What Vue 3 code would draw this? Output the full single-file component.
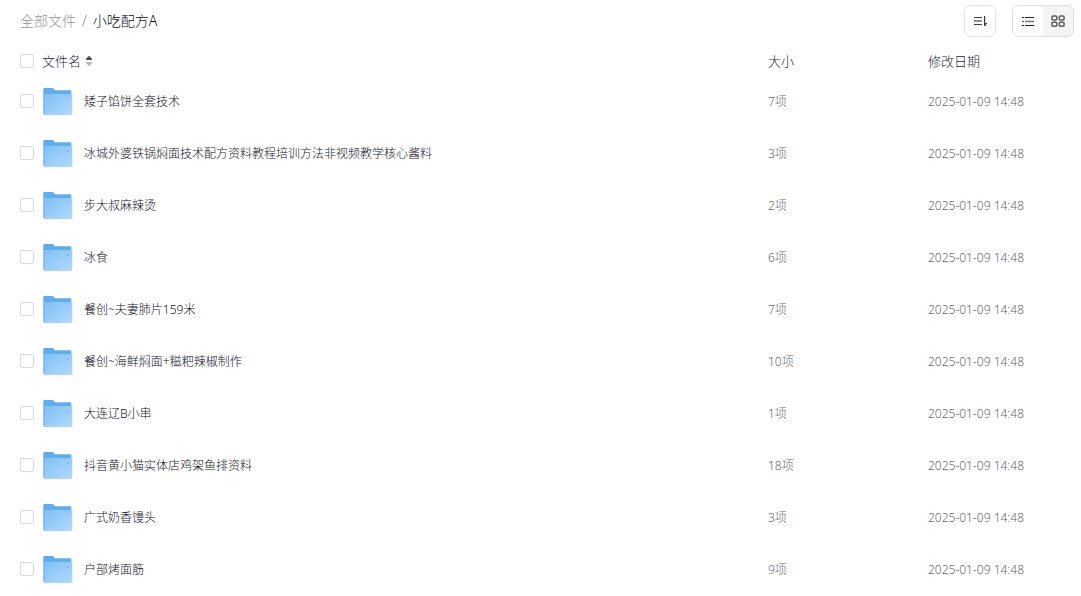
<script setup>
import { ref } from 'vue'

const date = '2025-01-09 14:48'
const files = ref([
  { name: '矮子馅饼全套技术', size: '7项', date },
  { name: '冰城外婆铁锅焖面技术配方资料教程培训方法非视频教学核心酱料', size: '3项', date },
  { name: '步大叔麻辣烫', size: '2项', date },
  { name: '冰食', size: '6项', date },
  { name: '餐创~夫妻肺片159米', size: '7项', date },
  { name: '餐创~海鲜焖面+糍粑辣椒制作', size: '10项', date },
  { name: '大连辽B小串', size: '1项', date },
  { name: '抖音黄小猫实体店鸡架鱼排资料', size: '18项', date },
  { name: '广式奶香馒头', size: '3项', date },
  { name: '户部烤面筋', size: '9项', date },
])
const selected = ref([])

function toggleAll(event) {
  selected.value = event.target.checked ? files.value.map((f) => f.name) : []
}
</script>

<template>
  <main class="page">
    <header class="bar">
      <nav class="crumbs" aria-label="路径">
        <a href="#" class="root">全部文件</a>
        <span class="slash">/</span>
        <span class="current">小吃配方A</span>
      </nav>
      <div class="tools">
        <button type="button" class="sort" aria-label="排序">
          <svg width="16" height="16" viewBox="0 0 16 16" fill="none">
            <path d="M2 4.5h8M2 11.5h8" stroke="#3e3f44" stroke-width="1.2" />
            <path d="M2 8h8" stroke="#77787c" stroke-width="1.6" />
            <path d="M12.6 3v10" stroke="#3e3f44" stroke-width="1.3" />
            <path d="M12 10h3.5L12.5 13.2z" fill="#3e3f44" />
          </svg>
        </button>
        <div class="views">
          <button type="button" class="view on" aria-label="列表">
            <svg width="16" height="16" viewBox="0 0 16 16" fill="none">
              <path d="M2 4.5h2M5 4.5h9M2 12.5h2M5 12.5h9" stroke="#26272c" stroke-width="1.2" />
              <path d="M2 8.4h2M5 8.4h9" stroke="#77787c" stroke-width="1.5" />
            </svg>
          </button>
          <button type="button" class="view" aria-label="网格">
            <svg width="16" height="16" viewBox="0 0 16 16" fill="none" stroke="#5c5d61" stroke-width="1.5">
              <rect x="1.9" y="2.9" width="4.9" height="4" rx="1.2" />
              <rect x="9.2" y="2.9" width="4.9" height="4" rx="1.2" />
              <rect x="1.9" y="9.2" width="4.9" height="4" rx="1.2" />
              <rect x="9.2" y="9.2" width="4.9" height="4" rx="1.2" />
            </svg>
          </button>
        </div>
      </div>
    </header>

    <table class="list">
      <colgroup>
        <col />
        <col class="col-size" />
        <col class="col-date" />
      </colgroup>
      <thead>
        <tr>
          <th scope="col">
            <div class="cell">
              <input type="checkbox" aria-label="全选" :checked="selected.length === files.length" @change="toggleAll" />
              <button type="button" class="order">
                文件名
                <svg width="8" height="12" viewBox="0 0 8 12">
                  <path d="M1 5V4l2.2-2.6q.8-.8 1.6 0L7 4v1z" fill="#4b4c50" />
                  <path d="M1 7v1l2.2 2.6q.8.8 1.6 0L7 8V7z" fill="#b5b6b9" />
                </svg>
              </button>
            </div>
          </th>
          <th scope="col">大小</th>
          <th scope="col">修改日期</th>
        </tr>
      </thead>
      <tbody>
        <tr v-for="(file, i) in files" :key="file.name">
          <td>
            <div class="cell">
              <input :id="`file-${i}`" v-model="selected" type="checkbox" :value="file.name" />
              <svg class="folder" width="32" height="32" viewBox="0 0 32 32">
                <defs>
                  <linearGradient :id="`paper-${i}`" x1="0" y1="0" x2="1" y2="1">
                    <stop offset="0" stop-color="#82bff3" />
                    <stop offset="1" stop-color="#b0dafd" />
                  </linearGradient>
                </defs>
                <path d="M1.3 3.8q0-.8.8-.8h8.4q.6 0 1 .6l1.2 1.7H28.5q.8 0 .8.8V29.5H2.1q-.8 0-.8-.8z" fill="#5fadea" />
                <path d="M2.3 9h28v20q0 .8-.8.8H3.1q-.8 0-.8-.8z" :fill="`url(#paper-${i})`" />
                <path d="M24 14l3.5-.8v1.8H24z" fill="#7dbbf0" opacity=".7" />
              </svg>
              <label :for="`file-${i}`" class="text">{{ file.name }}</label>
            </div>
          </td>
          <td><div class="text">{{ file.size }}</div></td>
          <td><div class="text">{{ file.date }}</div></td>
        </tr>
      </tbody>
    </table>
  </main>
</template>

<style>
body {
  margin: 0;
  background: #fff;
}
</style>

<style scoped>
.page {
  padding: 5px 0 0 20px;
  font-family: "Noto Sans", "Noto Sans CJK SC", sans-serif;
  font-size: 12px;
  font-weight: 300;
  line-height: 20px;
  color: #25253a;
}
.bar {
  display: flex;
  align-items: center;
  justify-content: space-between;
  height: 32px;
  padding-right: 7px;
}
.crumbs {
  display: flex;
  gap: 6px;
  font-size: 14px;
}
.root {
  color: #93949a;
  text-decoration: none;
}
.slash {
  color: #85868c;
}
.current {
  color: #0c0c18;
}
.tools {
  display: flex;
  gap: 16px;
}
button {
  padding: 0;
  border: 0;
  background: none;
  font: inherit;
  color: inherit;
  cursor: pointer;
}
.sort {
  display: grid;
  place-items: center;
  box-sizing: border-box;
  width: 32px;
  height: 32px;
  border: 1px solid #e4e4e6;
  border-radius: 6px;
}
.views {
  display: flex;
  box-sizing: border-box;
  height: 32px;
  border: 1px solid #dfdfe1;
  border-radius: 6px;
  background: #f4f4f5;
  overflow: hidden;
}
.view {
  display: grid;
  place-items: center;
  width: 30px;
}
.on {
  background: #fff;
  border-radius: 0 4px 4px 0;
}
.list {
  width: 100%;
  table-layout: fixed;
  border-collapse: collapse;
}
.col-size {
  width: 160px;
}
.col-date {
  width: 153px;
}
th,
td {
  padding: 0;
  text-align: left;
  vertical-align: middle;
  font-weight: inherit;
}
th {
  height: 48px;
  font-size: 13px;
}
td {
  height: 52px;
  color: #666772;
}
tbody tr:first-child td {
  height: 32px;
  padding-bottom: 10px;
}
.cell {
  display: flex;
  align-items: center;
}
.text {
  padding-top: 2px;
}
input {
  appearance: none;
  box-sizing: border-box;
  width: 14px;
  height: 14px;
  margin: 0 8px 0 0;
  border: 1px solid #d9d9dc;
  border-radius: 2px;
  background: #fff;
}
input:checked {
  border-color: #3b82f6;
  background: #3b82f6;
}
.order {
  display: flex;
  align-items: center;
  gap: 4px;
}
.folder {
  margin-right: 10px;
}
label {
  color: #12121f;
}
</style>
